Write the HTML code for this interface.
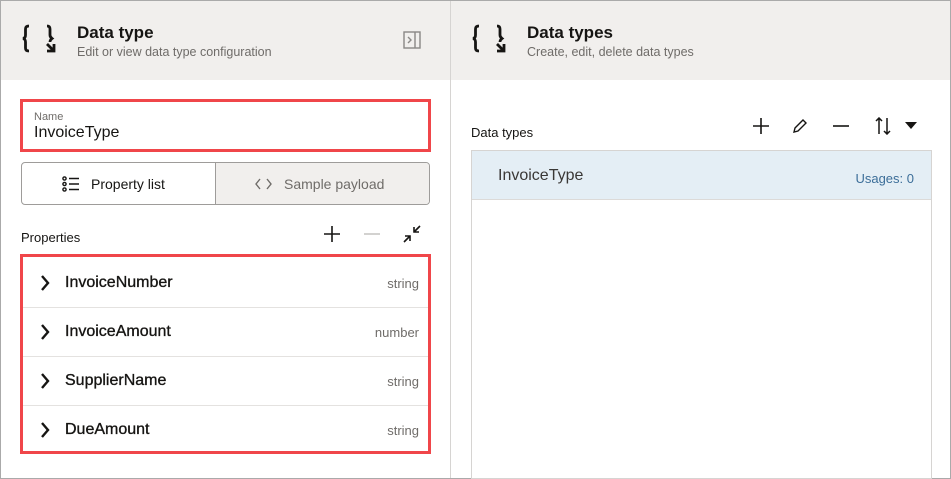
<!DOCTYPE html>
<html><head><meta charset="utf-8"><style>
*{box-sizing:border-box;margin:0;padding:0}
body{width:951px;height:479px;overflow:hidden;background:#fff;font-family:"Liberation Sans",sans-serif;color:#161513;position:relative}
.outer{position:absolute;left:0;top:0;width:951px;height:479px;border:1px solid #aaa}
.hdr{position:absolute;top:1px;height:79px;background:#f1efed}
.abs{position:absolute}
.title{font-size:17px;font-weight:bold;color:#161513}
.sub{font-size:12.5px;color:#6f6c69}
.t13{font-size:13px}
.pn{font-size:16px;-webkit-text-stroke:0.35px #161513}
</style></head><body>
<div class="outer"></div>
<div class="hdr" style="left:1px;width:449px"></div>
<div class="hdr" style="left:451px;width:499px"></div>
<div class="abs" style="left:450px;top:1px;width:1px;height:477px;background:#d6d4d2"></div>

<svg class="abs" style="left:21px;top:24px" width="36" height="30" viewBox="0 0 36 30" fill="none" stroke="#161513" stroke-width="2.8">
<path d="M8 2 Q4.5 2 4.5 5 V11 Q4.5 14 2 14.5 Q4.5 15 4.5 18 V24 Q4.5 27 8 27"/>
<path d="M26 2 Q29 2 29 5 V11 Q29 13 31 14.5 Q29 16 29 18"/>
<path d="M26 20 L32 26 M33 20 V27 H26"/>
</svg>
<div class="abs title" style="left:77px;top:23px">Data type</div>
<div class="abs sub" style="left:77px;top:45px">Edit or view data type configuration</div>
<svg class="abs" style="left:403px;top:31px" width="18" height="18" viewBox="0 0 18 18" fill="none" stroke="#8a8886" stroke-width="1.4">
<rect x="1" y="1" width="16" height="16"/><path d="M12 1V17M5 6l3 3-3 3"/></svg>

<svg class="abs" style="left:471px;top:24px" width="36" height="30" viewBox="0 0 36 30" fill="none" stroke="#161513" stroke-width="2.8">
<path d="M8 2 Q4.5 2 4.5 5 V11 Q4.5 14 2 14.5 Q4.5 15 4.5 18 V24 Q4.5 27 8 27"/>
<path d="M26 2 Q29 2 29 5 V11 Q29 13 31 14.5 Q29 16 29 18"/>
<path d="M26 20 L32 26 M33 20 V27 H26"/>
</svg>
<div class="abs title" style="left:527px;top:23px">Data types</div>
<div class="abs sub" style="left:527px;top:45px">Create, edit, delete data types</div>

<div class="abs" style="left:20px;top:99px;width:411px;height:53px;border:3px solid #f0464a"></div>
<div class="abs" style="left:34px;top:111px;font-size:11px;color:#6f6c69">Name</div>
<div class="abs" style="left:34px;top:124px;font-size:16px;color:#161513">InvoiceType</div>

<div class="abs" style="left:21px;top:162px;width:409px;height:43px;border:1px solid #9e9c9a;border-radius:4px;overflow:hidden">
 <div class="abs" style="left:193px;top:0;width:216px;height:43px;background:#f1efed;border-left:1px solid #9e9c9a"></div>
</div>
<svg class="abs" style="left:62px;top:176px" width="18" height="16" viewBox="0 0 18 16" fill="none" stroke="#161513" stroke-width="1.4">
<circle cx="2.5" cy="2.5" r="1.6"/><circle cx="2.5" cy="8" r="1.6"/><circle cx="2.5" cy="13.5" r="1.6"/><path d="M7 2.5H17M7 8H17M7 13.5H17"/></svg>
<div class="abs" style="left:91px;top:176px;font-size:14px">Property list</div>
<svg class="abs" style="left:255px;top:178px" width="17" height="12" viewBox="0 0 17 12" fill="none" stroke="#6f6c69" stroke-width="1.4"><path d="M5 1L1 6l4 5M12 1l4 5-4 5"/></svg>
<div class="abs" style="left:284px;top:176px;font-size:14px;color:#6f6c69">Sample payload</div>

<div class="abs t13" style="left:21px;top:230px">Properties</div>
<svg class="abs" style="left:323px;top:225px" width="18" height="18" viewBox="0 0 18 18" stroke="#161513" stroke-width="1.6"><path d="M9 1V17M1 9H17"/></svg>
<svg class="abs" style="left:363px;top:225px" width="18" height="18" viewBox="0 0 18 18" stroke="#c8c6c4" stroke-width="1.6"><path d="M1 9H17"/></svg>
<svg class="abs" style="left:403px;top:225px" width="18" height="18" viewBox="0 0 18 18" fill="none" stroke="#161513" stroke-width="1.6"><path d="M17 1L11 7M11 2V7H16M1 17L7 11M2 11H7V16"/></svg>

<div class="abs" style="left:20px;top:254px;width:411px;height:200px;border:3px solid #f0464a"></div>
<div class="abs" style="left:23px;top:307px;width:405px;height:1px;background:#e4e2e0"></div>
<div class="abs" style="left:23px;top:356px;width:405px;height:1px;background:#e4e2e0"></div>
<div class="abs" style="left:23px;top:405px;width:405px;height:1px;background:#e4e2e0"></div>
<svg class="abs" style="left:40px;top:275px" width="10" height="170" viewBox="0 0 10 170" fill="none" stroke="#161513" stroke-width="2.4">
<path d="M2 1l6 7-6 7M2 50l6 7-6 7M2 99l6 7-6 7M2 148l6 7-6 7"/></svg>
<div class="abs pn" style="left:65px;top:274px">InvoiceNumber</div>
<div class="abs pn" style="left:65px;top:323px">InvoiceAmount</div>
<div class="abs pn" style="left:65px;top:372px">SupplierName</div>
<div class="abs pn" style="left:65px;top:421px">DueAmount</div>
<div class="abs t13" style="right:532px;top:276px;color:#6f6c69">string</div>
<div class="abs t13" style="right:532px;top:325px;color:#6f6c69">number</div>
<div class="abs t13" style="right:532px;top:374px;color:#6f6c69">string</div>
<div class="abs t13" style="right:532px;top:423px;color:#6f6c69">string</div>

<div class="abs t13" style="left:471px;top:125px">Data types</div>
<svg class="abs" style="left:752px;top:117px" width="18" height="18" viewBox="0 0 18 18" stroke="#161513" stroke-width="1.6"><path d="M9 1V17M1 9H17"/></svg>
<svg class="abs" style="left:792px;top:118px" width="16" height="16" viewBox="0 0 16 16" fill="none" stroke="#161513" stroke-width="1.4"><path d="M2 14L3 10 11 2 14 5 6 13Z"/></svg>
<svg class="abs" style="left:832px;top:117px" width="18" height="18" viewBox="0 0 18 18" stroke="#161513" stroke-width="1.6"><path d="M1 9H17"/></svg>
<svg class="abs" style="left:875px;top:117px" width="16" height="18" viewBox="0 0 16 18" fill="none" stroke="#161513" stroke-width="1.5"><path d="M4 17V1M1 4l3-3 3 3M12 1V17M9 14l3 3 3-3"/></svg>
<svg class="abs" style="left:905px;top:122px" width="12" height="7" viewBox="0 0 12 7"><path d="M0 0H12L6 7Z" fill="#161513"/></svg>
<div class="abs" style="left:471px;top:150px;width:461px;height:329px;border:1px solid #d6d4d2"></div>
<div class="abs" style="left:472px;top:151px;width:459px;height:49px;background:#e4eef5;border-bottom:1px solid #dcdad8"></div>
<div class="abs" style="left:498px;top:167px;font-size:16px;color:#3a3836">InvoiceType</div>
<div class="abs t13" style="right:37px;top:171px;color:#3c6e99">Usages: 0</div>
</body></html>
